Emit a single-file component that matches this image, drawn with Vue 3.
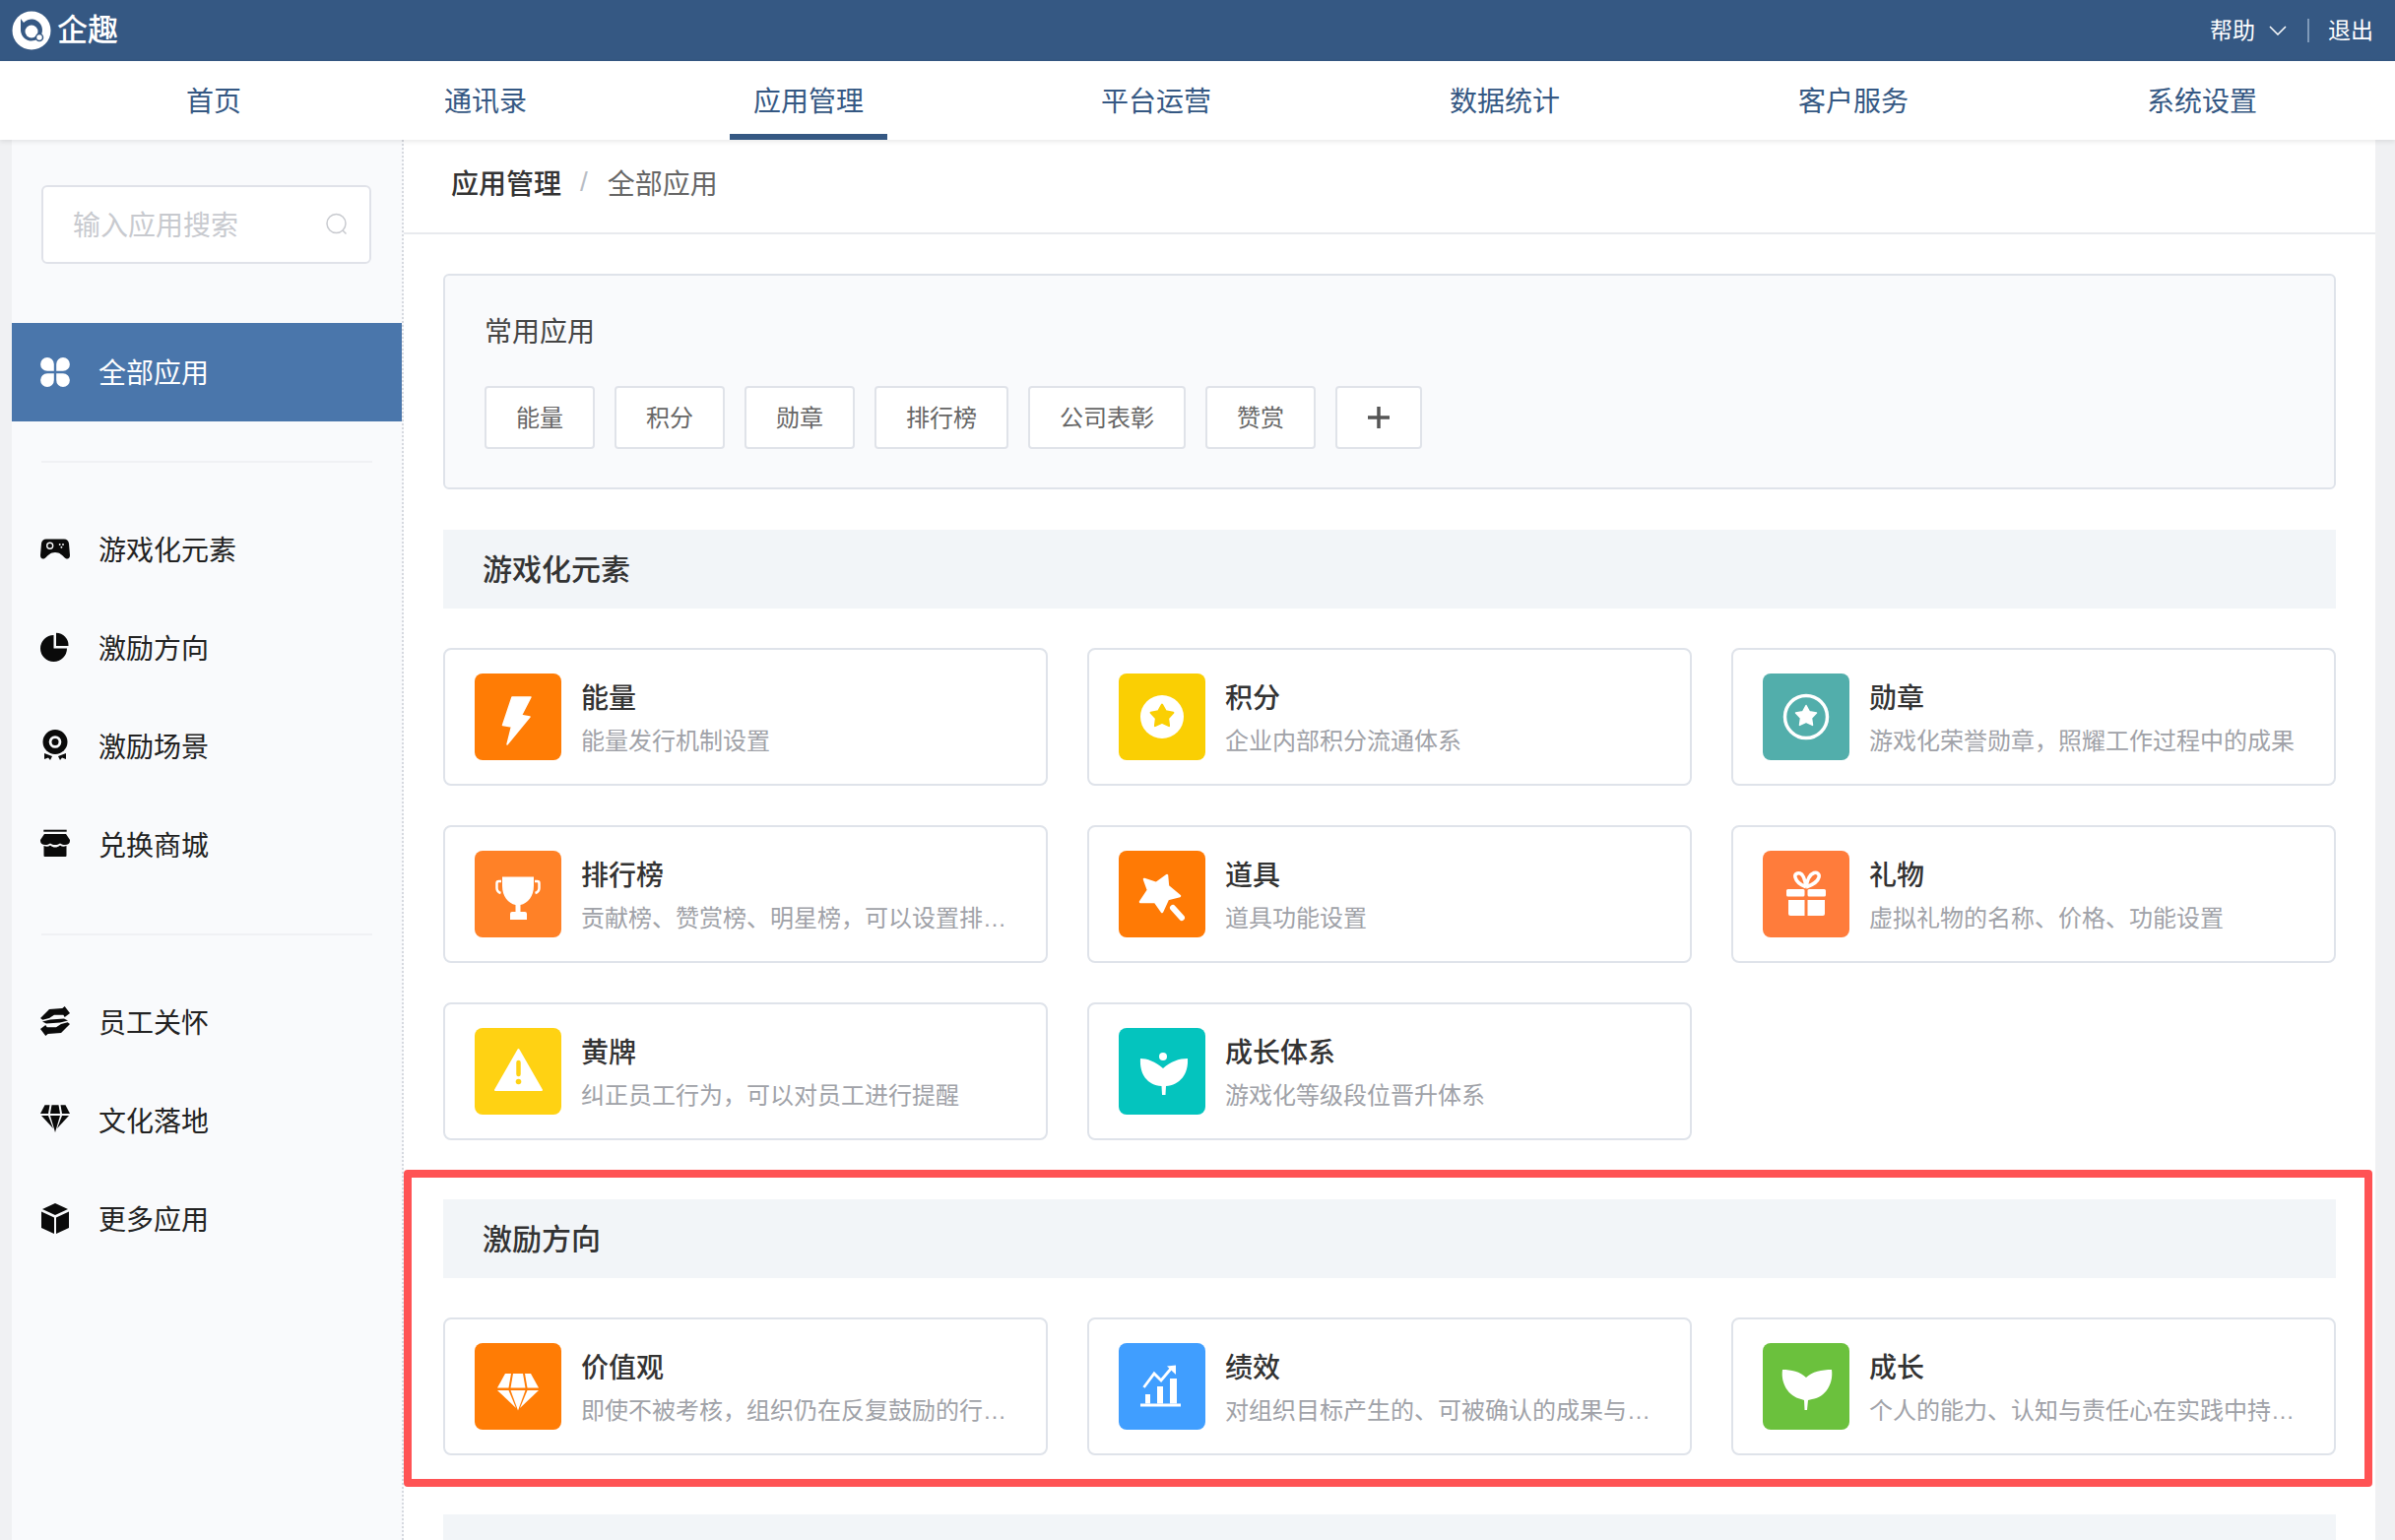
<script setup>
const starPts = (cx, cy, R, r, rot = -90) => {
  const p = []
  for (let i = 0; i < 10; i++) {
    const a = ((rot + i * 36) * Math.PI) / 180
    const d = i % 2 ? r : R
    p.push((cx + d * Math.cos(a)).toFixed(1) + ',' + (cy + d * Math.sin(a)).toFixed(1))
  }
  return p.join(' ')
}

const icons = {
  bolt: `<path fill="#fff" stroke="#fff" stroke-width="1.500" stroke-linejoin="round" d="M38 24h19l-9.500 18.500 8.500 1.500-23 28 4.500-18-9-1.500z"/>`,
  coin: `<circle cx="44" cy="44" r="22" fill="#fff"/><polygon points="${starPts(44, 43.5, 12, 6.400)}" fill="#facf03" stroke="#facf03" stroke-width="2" stroke-linejoin="round"/>`,
  medal: `<circle cx="44" cy="44" r="21.500" fill="none" stroke="#fff" stroke-width="3.500"/><polygon points="${starPts(44, 43.5, 11, 5.800)}" fill="#fff" stroke="#fff" stroke-width="1.500" stroke-linejoin="round"/>`,
  trophy: `<path fill="none" stroke="#fff" stroke-width="2.500" d="M27 31h-2.500a2 2 0 0 0-2 2v5c0 2 1 4 4 5M61 31h2.500a2 2 0 0 1 2 2v5c0 2-1 4-4 5"/><path fill="#fff" d="M28 26.500h32v9c0 11-6 18-13.500 19.500V62H51a2 2 0 0 1 2 2v6H36v-6a2 2 0 0 1 2-2h3.500v-7C34 53.500 28 46.500 28 35.500z"/>`,
  wand: `<polygon points="49,25 50,36 62,46 50,49 44,62 37,52 22,52 30,40 26,29 38,33" fill="#fff" stroke="#fff" stroke-width="2.500" stroke-linejoin="round"/><path d="M55 58l9 10" stroke="#fff" stroke-width="6" stroke-linecap="round"/>`,
  gift: `<g fill="#fff"><rect x="24" y="39" width="18.500" height="7.500" rx="1.500"/><rect x="45.500" y="39" width="18.500" height="7.500" rx="1.500"/><path d="M26 50h16.500v16H28a2 2 0 0 1-2-2z"/><path d="M45.500 50H63v14a2 2 0 0 1-2 2H45.500z"/></g><path fill="none" stroke="#fff" stroke-width="3.500" d="M44 37c-5-2-10-6-11-10-1-3 2-5 5-4 3 1 5 7 6 14 1-7 4-13 8-14.500 3-1 6 1 5 4.500-1 4-7 8-13 10"/>`,
  warn: `<path fill="#fff" stroke="#fff" stroke-width="2" stroke-linejoin="round" d="M44.500 22L68 63H21z"/><path d="M44.500 35v12" stroke="#ffd213" stroke-width="4.500" stroke-linecap="round"/><circle cx="44.500" cy="54.500" r="2.800" fill="#ffd213"/>`,
  tulip: `<circle cx="45" cy="29" r="4" fill="#fff"/><path fill="#fff" d="M22 31c7 0 15 3 23 10 8-7 16-10 25-10 1 16-8 27-22 28l-.5 9H44l-.5-9C29 58 21 47 22 31z"/>`,
  gem: `<g fill="#fff"><path d="M31 31h6l-2.500 14.500H23z"/><path d="M39 31h10l2.500 14.500h-15z"/><path d="M51 31h6l8 14.500H53.500z"/><path d="M23 48h11.500l7.500 18z"/><path d="M36.500 48h15L44 68.500z"/><path d="M53.500 48H65L46 66z"/></g>`,
  chart: `<g fill="#fff"><rect x="22" y="61.500" width="41" height="3"/><rect x="27" y="52" width="5" height="9.500"/><rect x="39" y="44" width="6" height="17.500"/><rect x="52" y="36" width="7" height="25.500"/></g><path d="M25.500 45L36 31l7 7 10-12" fill="none" stroke="#fff" stroke-width="2.800"/><path d="M49 23.500L58 22.500V32z" fill="#fff"/>`,
  leaf: `<path fill="#fff" d="M20 27c9 0 18 2 24 8 6-6 16-8 26-8 2 14-6 28-20 30l-4 1-1 10h-2.500L42 58l-3-1C26 54 18 41 20 27z"/>`,
}

const side = {
  pad: `<path fill="currentColor" d="M6 5.500H24C27 5.500 28.500 7 29 10L30 22C30 25 28 26.500 25.500 25 22 22 20 19 15 19 10 19 8 22 4.500 25 2 26.500 0 25 0 22L1 10C1.500 7 3 5.500 6 5.500z"/><circle cx="9.700" cy="12.300" r="3" fill="none" stroke="#f9fafc" stroke-width="1.400"/><g fill="#f9fafc"><circle cx="19.700" cy="11" r=".95"/><circle cx="23" cy="11" r=".95"/><circle cx="21.400" cy="13.800" r=".95"/></g>`,
  pie: `<path fill="currentColor" d="M13.500 3V16.500H27A13.500 13.500 0 1 1 13.500 3z"/><path fill="currentColor" d="M16 .7A12.500 12.500 0 0 1 28.500 14H16z"/>`,
  badge: `<circle cx="15" cy="11.500" r="12.500" fill="currentColor"/><circle cx="15" cy="11.500" r="6.300" fill="#f9fafc"/><circle cx="15" cy="11.500" r="3.500" fill="currentColor"/><path fill="currentColor" d="M4 23L12 26 10 30 8 27.500 4 29zM26 23L18 26 20 30 22 27.500 26 29z"/>`,
  shop: `<g fill="currentColor"><rect x="3.300" y=".7" width="23.400" height="2"/><path d="M4 5H26L30 11V12C30 14.500 28 16 25 16 23 16 22 15.500 20 14.500 18 15.500 17 16 15 16 13 16 12 15.500 10 14.500 8 15.500 7 16 5 16 2 16 0 14.500 0 12V11z"/><path d="M3.500 17C6 18 8 18 10 16.500 12 18 13 18.500 15 18.500 17 18.500 18 18 20 16.500 22 18 24 18 26.500 17V27A1 1 0 0 1 25.500 28H4.500A1 1 0 0 1 3.500 27z"/></g>`,
  hands: `<g fill="currentColor"><path d="M0 12L9 3 22.300 2 24.700 0 30 7 24.700 11 23.300 8.700H14L9 12 2.300 13.700z"/><path d="M30 18L21 27 7.700 28 5.300 30 0 23 5.300 19 6.700 21.300H16L21 18 27.700 16.300z"/><path d="M10 13.500L24 12.500 28 14.500 20 16.500 6 17.500 2 15.500z"/></g>`,
  dia: `<g fill="currentColor"><path d="M0 9L4.500 .3H9.500L8 9z"/><path d="M10 9L11.500 .3H18.500L20 9z"/><path d="M22 9L20.500 .3H25.500L30 9z"/><path d="M1 11H8L13 24z"/><path d="M10 11H20L15 28z"/><path d="M22 11H29L17 24z"/></g>`,
  box: `<g fill="currentColor"><path d="M15 0l13 6-13 6L2 6z"/><path d="M1 8.500l13 6V31L1 25z"/><path d="M29 8.500l-13 6V31l13-6z"/></g>`,
}

const nav = ['首页', '通讯录', '应用管理', '平台运营', '数据统计', '客户服务', '系统设置']
const groupA = [
  { label: '游戏化元素', icon: 'pad' },
  { label: '激励方向', icon: 'pie' },
  { label: '激励场景', icon: 'badge' },
  { label: '兑换商城', icon: 'shop' },
]
const groupB = [
  { label: '员工关怀', icon: 'hands' },
  { label: '文化落地', icon: 'dia' },
  { label: '更多应用', icon: 'box' },
]
const tags = ['能量', '积分', '勋章', '排行榜', '公司表彰', '赞赏']
const gameCards = [
  { t: '能量', d: '能量发行机制设置', c: '#ff7c05', i: 'bolt' },
  { t: '积分', d: '企业内部积分流通体系', c: '#facf03', i: 'coin' },
  { t: '勋章', d: '游戏化荣誉勋章，照耀工作过程中的成果', c: '#52aeab', i: 'medal' },
  { t: '排行榜', d: '贡献榜、赞赏榜、明星榜，可以设置排行榜的统计周期', c: '#ff8127', i: 'trophy' },
  { t: '道具', d: '道具功能设置', c: '#ff7a05', i: 'wand' },
  { t: '礼物', d: '虚拟礼物的名称、价格、功能设置', c: '#ff7c3b', i: 'gift' },
  { t: '黄牌', d: '纠正员工行为，可以对员工进行提醒', c: '#ffd213', i: 'warn' },
  { t: '成长体系', d: '游戏化等级段位晋升体系', c: '#04c4be', i: 'tulip' },
]
const driveCards = [
  { t: '价值观', d: '即使不被考核，组织仍在反复鼓励的行为和做法', c: '#ff7c05', i: 'gem' },
  { t: '绩效', d: '对组织目标产生的、可被确认的成果与贡献的衡量', c: '#409eff', i: 'chart' },
  { t: '成长', d: '个人的能力、认知与责任心在实践中持续地提升', c: '#6bc13d', i: 'leaf' },
]
</script>

<template>
  <div class="page">
    <header class="top">
      <div class="brand">
        <svg class="logo" viewBox="0 0 40 40">
          <circle cx="20" cy="20" r="19.500" fill="#fff" />
          <path d="M9 8l3 4a11 11 0 1 1-3 8z" fill="#355883" />
          <circle cx="20" cy="21" r="6.500" fill="#fff" />
          <circle cx="28" cy="27" r="3.500" fill="#fff" stroke="#355883" stroke-width="1.500" />
        </svg>
        <span class="brand-name">企趣</span>
      </div>
      <div class="top-right">
        <span>帮助</span>
        <svg class="chev" viewBox="0 0 18 10"><path d="M1 1l8 8 8-8" fill="none" stroke="#fff" stroke-width="1.500" /></svg>
        <i class="sep"></i>
        <span>退出</span>
      </div>
    </header>

    <nav class="nav">
      <span v-for="(n, i) in nav" :key="n" class="nav-item" :class="{ on: i === 2 }">{{ n }}</span>
    </nav>

    <div class="body">
      <aside class="side">
        <div class="search">
          <span class="ph">输入应用搜索</span>
          <svg class="sicon" viewBox="0 0 24 24"><circle cx="11.500" cy="11" r="9.500" fill="none" stroke="#c8cacf" stroke-width="1.500" /><path d="M18 18l3.500 3.500" stroke="#c8cacf" stroke-width="1.500" /></svg>
        </div>
        <div class="side-item active">
          <svg class="side-icon" viewBox="0 0 30 30">
            <path fill="#fff" d="M7 0a6.800 6.800 0 0 1 6.800 6.800V13.800H7A6.900 6.900 0 0 1 7 0zM23 0a6.900 6.900 0 0 1 0 13.800H16.200V6.800A6.800 6.800 0 0 1 23 0zM7 30a6.900 6.900 0 0 1 0-13.800H13.800V23A6.800 6.800 0 0 1 7 30zM23 30a6.800 6.800 0 0 1-6.800-7V16.200H23A6.900 6.900 0 0 1 23 30z" />
          </svg>
          <span>全部应用</span>
        </div>
        <div class="rule first"></div>
        <div v-for="g in groupA" :key="g.label" class="side-item">
          <svg class="side-icon" viewBox="0 0 30 30" v-html="side[g.icon]"></svg>
          <span>{{ g.label }}</span>
        </div>
        <div class="rule second"></div>
        <div v-for="g in groupB" :key="g.label" class="side-item">
          <svg class="side-icon" viewBox="0 0 30 30" v-html="side[g.icon]"></svg>
          <span>{{ g.label }}</span>
        </div>
      </aside>

      <main class="main">
        <div class="crumb">
          <b>应用管理</b>
          <span class="slash">/</span>
          <span>全部应用</span>
        </div>
        <div class="content">
          <section class="common">
            <h4>常用应用</h4>
            <div class="tags">
              <span v-for="t in tags" :key="t" class="tag">{{ t }}</span>
              <span class="tag plus">
                <svg viewBox="0 0 24 24" width="24" height="24"><path d="M12 1v22M1 12h22" stroke="#555" stroke-width="3.500" /></svg>
              </span>
            </div>
          </section>

          <section class="group">
            <h3 class="ghead">游戏化元素</h3>
            <div class="cards">
              <div v-for="c in gameCards" :key="c.t" class="card">
                <svg class="cicon" viewBox="0 0 88 88" :style="{ background: c.c }" v-html="icons[c.i]"></svg>
                <div class="ctext">
                  <div class="ct">{{ c.t }}</div>
                  <div class="cd">{{ c.d }}</div>
                </div>
              </div>
            </div>
          </section>

          <section class="group marked">
            <h3 class="ghead">激励方向</h3>
            <div class="cards">
              <div v-for="c in driveCards" :key="c.t" class="card">
                <svg class="cicon" viewBox="0 0 88 88" :style="{ background: c.c }" v-html="icons[c.i]"></svg>
                <div class="ctext">
                  <div class="ct">{{ c.t }}</div>
                  <div class="cd">{{ c.d }}</div>
                </div>
              </div>
            </div>
          </section>

          <section class="group">
            <h3 class="ghead"></h3>
          </section>
        </div>
      </main>
    </div>
  </div>
</template>

<style>
html, body { margin: 0; background: #f0f1f3; }
</style>

<style scoped>
* { box-sizing: border-box; }
.page {
  width: 2432px;
  height: 1564px;
  overflow: hidden;
  display: flex;
  flex-direction: column;
  font-family: "Liberation Sans", "Noto Sans CJK SC", sans-serif;
  background: #f0f1f3;
}
.top {
  height: 62px;
  flex: none;
  background: #355883;
  display: flex;
  align-items: center;
  justify-content: space-between;
  padding: 0 22px 0 12px;
  color: #fff;
}
.brand { display: flex; align-items: center; gap: 6px; }
.logo { width: 40px; height: 40px; display: block; }
.brand-name { font-size: 31px; font-weight: 500; line-height: 40px; }
.top-right { display: flex; align-items: center; font-size: 23px; line-height: 40px; }
.chev { width: 18px; height: 10px; margin-left: 14px; }
.sep { width: 2px; height: 24px; background: #7f9ab9; margin: 0 19px 0 21px; }

.nav {
  height: 80px;
  flex: none;
  background: #fff;
  display: flex;
  gap: 194px;
  padding-left: 165px;
  box-shadow: 0 2px 5px rgba(0, 0, 0, .09);
  position: relative;
  z-index: 2;
}
.nav-item {
  height: 80px;
  padding: 3px 24px 0;
  font-size: 28px;
  line-height: 78px;
  color: #355883;
}
.nav-item:nth-child(2) { margin-left: -36px; }
.nav-item:nth-child(3) { margin-left: -12px; }
.nav-item:nth-child(4) { margin-left: -1px; }
.nav-item.on { border-bottom: 6px solid #355883; }

.body { flex: 1; display: flex; padding: 0 20px 0 12px; min-height: 0; }
.side {
  width: 398px;
  flex: none;
  background: #f9fafc;
  border-right: 2px dotted #d6d9df;
  padding-top: 46px;
}
.search {
  width: 335px;
  height: 80px;
  margin: 0 0 60px 30px;
  background: #fff;
  border: 2px solid #e0e2e9;
  border-radius: 6px;
  display: flex;
  align-items: center;
  justify-content: space-between;
  padding: 0 21px 2px 30px;
}
.ph { font-size: 28px; color: #c8cacf; }
.sicon { width: 24px; height: 24px; margin-top: 2px; }
.side-item {
  height: 100px;
  display: flex;
  align-items: center;
  gap: 29px;
  padding-left: 29px;
  font-size: 28px;
  color: #222;
}
.side-icon { width: 30px; height: 30px; color: #0a0a0a; flex: none; overflow: visible; }
.active { background: #4a76ab; color: #fff; }
.active span { margin-bottom: 2px; }
.rule { height: 2px; width: 336px; margin-left: 30px; background: #f0f1f4; }
.rule.first { margin-top: 40px; margin-bottom: 37px; }
.rule.second { margin-top: 41px; margin-bottom: 37px; }

.main { flex: 1; background: #fff; min-width: 0; display: flex; flex-direction: column; }
.crumb {
  height: 96px;
  flex: none;
  padding: 0 0 8px 48px;
  border-bottom: 2px solid #e8eaee;
  display: flex;
  align-items: center;
  font-size: 28px;
  color: #666;
}
.crumb b { font-weight: 500; color: #333; }
.slash { margin: 0 20px 0 19px; color: #b8bdc5; }
.content { padding: 40px 40px 0; }
.common {
  height: 219px;
  background: #f9fafc;
  border: 2px solid #dfe3ea;
  border-radius: 6px;
  padding: 38px 0 0 40px;
  margin-bottom: 41px;
}
.common h4 { margin: 0; font-size: 28px; line-height: 40px; font-weight: 400; color: #444; }
.tags { display: flex; gap: 20px; margin-top: 34px; }
.tag {
  height: 64px;
  padding: 0 30px;
  background: #fff;
  border: 2px solid #e0e3e9;
  border-radius: 4px;
  font-size: 24px;
  line-height: 62px;
  color: #666;
}
.tag.plus { width: 88px; padding: 0; display: flex; align-items: center; justify-content: center; }

.group { margin-bottom: 60px; }
.marked { position: relative; }
.marked::after {
  content: "";
  position: absolute;
  left: -40px;
  right: -37px;
  top: -30px;
  bottom: -32px;
  border: 8px solid #ff5354;
  border-radius: 4px;
  pointer-events: none;
}
.ghead {
  margin: 0;
  height: 80px;
  background: #f2f5f8;
  padding-left: 40px;
  font-size: 30px;
  font-weight: 500;
  line-height: 81px;
  color: #333;
}
.cards { display: grid; grid-template-columns: repeat(3, 1fr); gap: 40px; margin-top: 40px; }
.card {
  height: 140px;
  min-width: 0;
  background: #fff;
  border: 2px solid #dfe3ea;
  border-radius: 8px;
  padding: 24px 30px;
  display: flex;
  gap: 20px;
}
.cicon { width: 88px; height: 88px; border-radius: 8px; flex: none; display: block; }
.ctext { min-width: 0; flex: 1; padding-top: 4px; }
.ct { font-size: 28px; line-height: 44px; font-weight: 500; color: #333; }
.cd {
  margin-top: 1px;
  font-size: 24px;
  line-height: 40px;
  color: #a0a2a8;
  white-space: nowrap;
  overflow: hidden;
  text-overflow: ellipsis;
}
</style>
